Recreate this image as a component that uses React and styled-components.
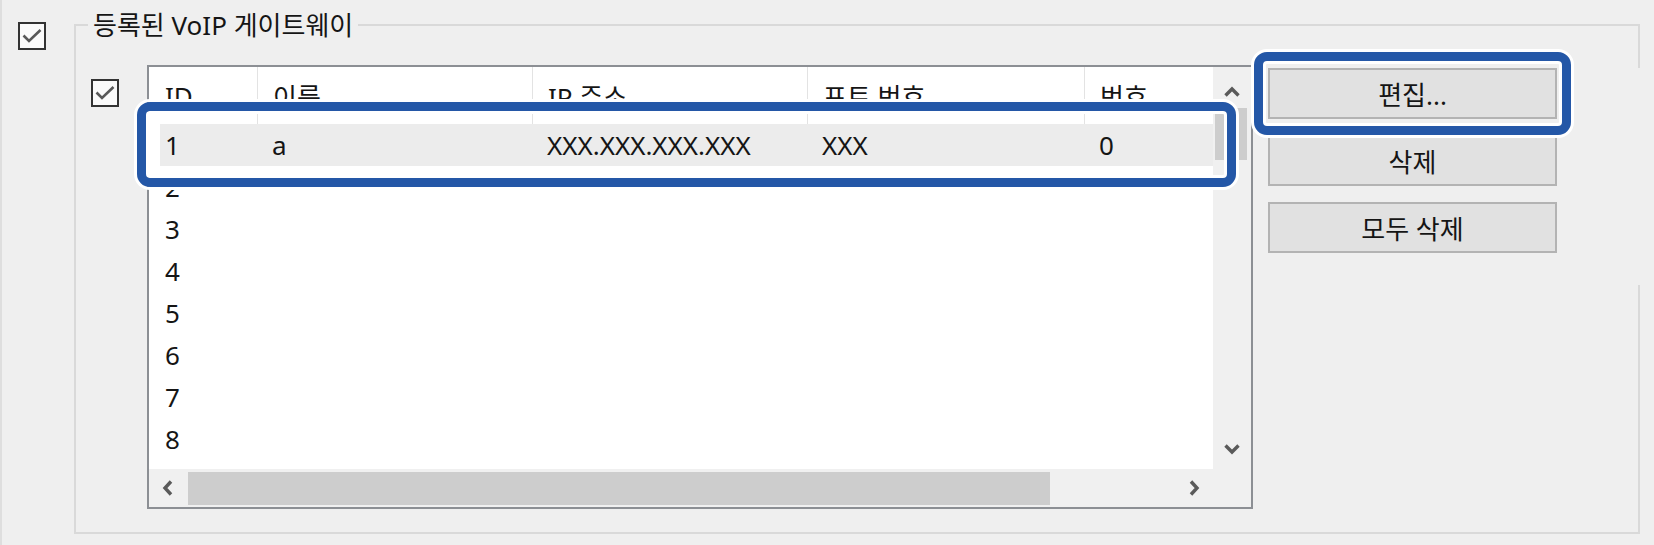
import React from 'react'
import styled, { createGlobalStyle, css } from 'styled-components'

const columns = ['ID', '이름', 'IP 주소', '포트 번호', '번호']

const rows = [
  { id: 1, name: 'a', ip: 'XXX.XXX.XXX.XXX', port: 'XXX', no: '0', selected: true },
  { id: 2 },
  { id: 3 },
  { id: 4 },
  { id: 5 },
  { id: 6 },
  { id: 7 },
  { id: 8 },
]

const buttons = [
  { label: '편집...', highlight: true },
  { label: '삭제' },
  { label: '모두 삭제' },
]

const GlobalStyle = createGlobalStyle`
  body {
    margin: 0;
    background: #efefef;
    font-family: "Noto Sans", "Noto Sans CJK KR", sans-serif;
    color: #151515;
  }
`

const highlight = css`
  &::after {
    content: '';
    position: absolute;
    border: 9px solid #2457a7;
    border-radius: 13px;
    box-shadow: 0 0 0 3px #fff, inset 0 0 0 3px #fff;
    pointer-events: none;
    z-index: 2;
  }
`

const Page = styled.div`
  width: 1654px;
  height: 545px;
  box-sizing: border-box;
  border-left: 2px solid #dedede;
  display: flex;
  align-items: flex-start;
`

const CheckBox = styled.span`
  flex: none;
  width: 28px;
  height: 28px;
  box-sizing: border-box;
  border: 2px solid #333;
  background: #fafafa;
  margin: ${(p) => p.$mt}px 0 0 ${(p) => p.$ml}px;
  svg {
    display: block;
  }
`

const GroupBox = styled.fieldset`
  margin: 10px 0 0 28px;
  padding: 0;
  width: 1566px;
  height: 524px;
  box-sizing: border-box;
  min-inline-size: 0;
  border: 2px solid #d9d9d9;
  border-right: none;
  background-image: linear-gradient(#d9d9d9, #d9d9d9), linear-gradient(#d9d9d9, #d9d9d9);
  background-size: 2px 42px, 2px 247px;
  background-position: right top, right bottom;
  background-repeat: no-repeat;
`

const Legend = styled.legend`
  margin-left: 12px;
  padding: 0 5px;
  font-size: 26px;
  line-height: 30px;
`

const Body = styled.div`
  display: flex;
  align-items: flex-start;
  padding-left: 15px;
`

const ListBox = styled.div`
  margin: 25px 0 0 28px;
  width: 1106px;
  height: 444px;
  box-sizing: border-box;
  border: 2px solid #8c8f94;
  background: #fff;
  display: grid;
  grid-template-columns: 1fr 38px;
  grid-template-rows: 1fr 38px;
`

const ListContent = styled.div`
  display: flex;
  flex-direction: column;
  min-width: 0;
`

const Header = styled.div`
  display: grid;
  grid-template-columns: 109px 275px 275px 277px 1fr;
  height: 57px;
`

const HeaderCell = styled.div`
  display: flex;
  align-items: center;
  padding-left: ${(p) => (p.$first ? 16 : 15)}px;
  font-size: 26px;
  border-right: ${(p) => (p.$last ? 'none' : '1px solid #e3e3e3')};
  white-space: nowrap;
`

const Rows = styled.div`
  padding-left: 11px;
`

const Row = styled.div`
  position: relative;
  display: grid;
  grid-template-columns: 98px 275px 275px 277px 1fr;
  height: 42px;
  align-items: center;
  font-size: 26px;
  background: ${(p) => (p.$selected ? '#ececec' : 'transparent')};
  ${(p) => p.$selected && highlight}
  &::after {
    inset: -22px -23px -21px -23px;
  }
`

const Cell = styled.span`
  padding-left: ${(p) => (p.$first ? 5 : 14)}px;
  white-space: nowrap;
`

const VScroll = styled.div`
  background: #f0f0f0;
  display: flex;
  flex-direction: column;
`

const HScroll = styled.div`
  background: #f0f0f0;
  display: flex;
  align-items: center;
`

const Corner = styled.div`
  background: #f0f0f0;
`

const Arrow = styled.div`
  flex: none;
  display: flex;
  align-items: center;
  justify-content: center;
  width: 38px;
  height: ${(p) => (p.$vertical ? '41px' : '38px')};
  box-sizing: border-box;
  padding-top: ${(p) => p.$pt || 0}px;
  svg {
    display: block;
  }
`

const VThumb = styled.div`
  height: 52px;
  margin: 0 4px 0 2px;
  background: #cdcdcd;
`

const HThumb = styled.div`
  width: 862px;
  height: 33px;
  margin-left: 1px;
  background: #cdcdcd;
`

const Spacer = styled.div`
  flex: 1;
`

const ButtonColumn = styled.div`
  margin: 28px 0 0 15px;
  display: flex;
  flex-direction: column;
  gap: 16px;
`

const Button = styled.button`
  position: relative;
  width: 289px;
  height: 51px;
  box-sizing: border-box;
  border: 2px solid #b3b3b3;
  background: #e1e1e1;
  font-family: inherit;
  font-size: 26px;
  color: #151515;
  padding: 0;
  ${(p) => p.$highlight && highlight}
  &::after {
    inset: -18px -16px -18px -16px;
  }
`

const Check = () => (
  <svg width="24" height="24" viewBox="0 0 24 24">
    <polyline points="3.5,11.5 9,17 20.5,6" fill="none" stroke="#585858" strokeWidth="2.6" />
  </svg>
)

const Chevron = ({ dir }) => {
  const pts = {
    up: '1.5,11.5 8,5 14.5,11.5',
    down: '1.5,4.5 8,11 14.5,4.5',
    left: '11,1.5 5,8 11,14.5',
    right: '5,1.5 11,8 5,14.5',
  }[dir]
  return (
    <svg width="16" height="16" viewBox="0 0 16 16">
      <polyline points={pts} fill="none" stroke="#5a5a5a" strokeWidth="3.4" />
    </svg>
  )
}

const App = () => {
  return (
    <Page>
      <GlobalStyle />
      <CheckBox $mt={22} $ml={16}>
        <Check />
      </CheckBox>
      <GroupBox>
        <Legend>등록된 VoIP 게이트웨이</Legend>
        <Body>
          <CheckBox $mt={39} $ml={0}>
            <Check />
          </CheckBox>
          <ListBox>
            <ListContent>
              <Header>
                {columns.map((c, i) => (
                  <HeaderCell key={c} $first={i === 0} $last={i === columns.length - 1}>
                    {c}
                  </HeaderCell>
                ))}
              </Header>
              <Rows>
                {rows.map((r) => (
                  <Row key={r.id} $selected={r.selected}>
                    <Cell $first>{r.id}</Cell>
                    <Cell>{r.name}</Cell>
                    <Cell>{r.ip}</Cell>
                    <Cell>{r.port}</Cell>
                    <Cell>{r.no}</Cell>
                  </Row>
                ))}
              </Rows>
            </ListContent>
            <VScroll>
              <Arrow $vertical $pt={8}>
                <Chevron dir="up" />
              </Arrow>
              <VThumb />
              <Spacer />
              <Arrow $vertical>
                <Chevron dir="down" />
              </Arrow>
            </VScroll>
            <HScroll>
              <Arrow>
                <Chevron dir="left" />
              </Arrow>
              <HThumb />
              <Spacer />
              <Arrow>
                <Chevron dir="right" />
              </Arrow>
            </HScroll>
            <Corner />
          </ListBox>
          <ButtonColumn>
            {buttons.map((b) => (
              <Button key={b.label} $highlight={b.highlight}>
                {b.label}
              </Button>
            ))}
          </ButtonColumn>
        </Body>
      </GroupBox>
    </Page>
  )
}

export default App
